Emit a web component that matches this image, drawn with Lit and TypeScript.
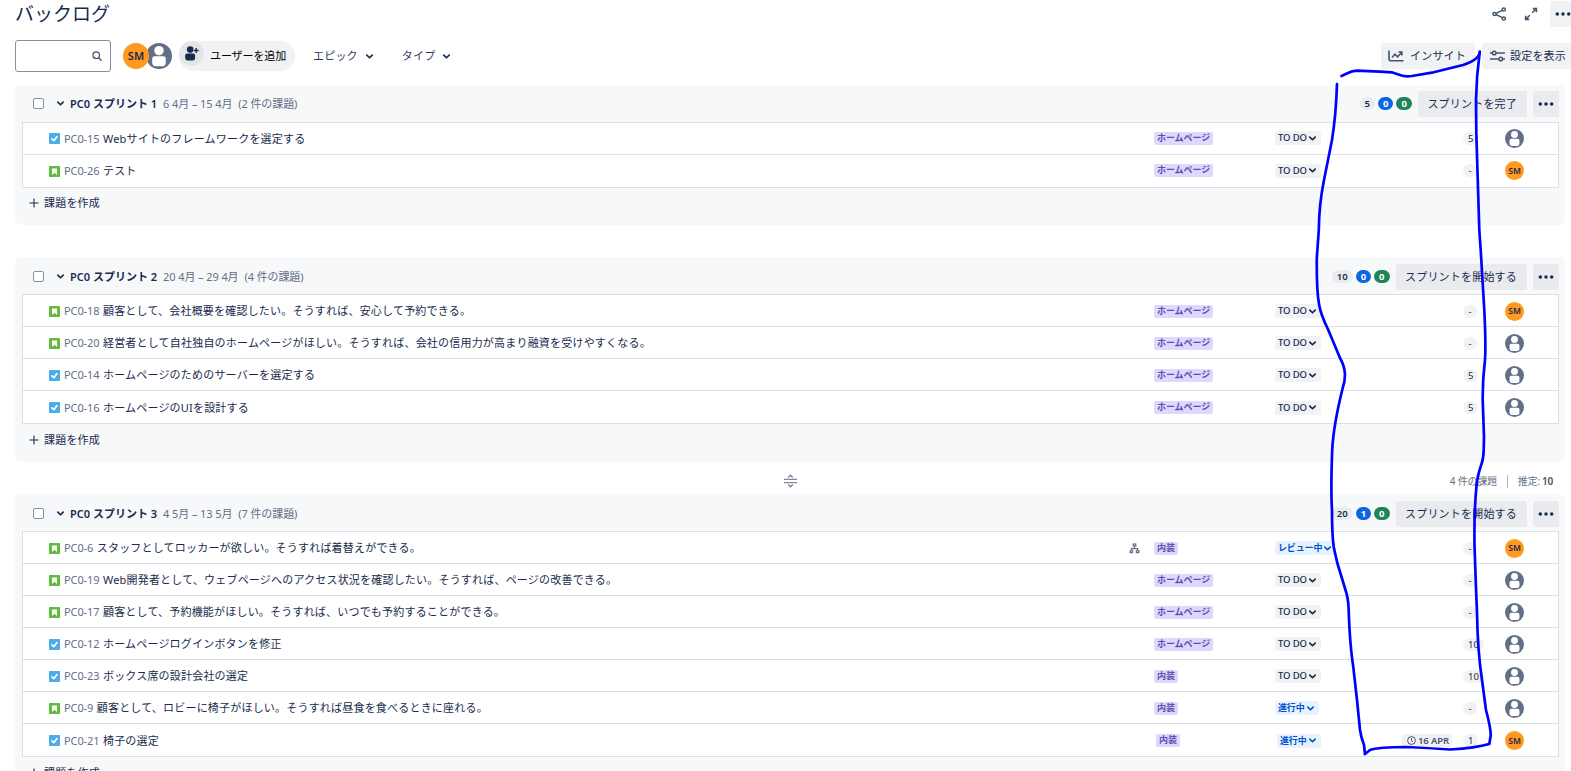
import { LitElement, html, css, svg, nothing } from "lit";
import { customElement, property } from "lit/decorators.js";
import { classMap } from "lit/directives/class-map.js";

type Issue = {
  kind: "task" | "story";
  key: string;
  title: string;
  epic: string;
  status: string;
  points: string;
  owner: "SM" | "";
  due?: string;
  children?: boolean;
  nudge?: boolean;
};
type Sprint = { name: string; dates: string; count: string; totals: string[]; action: string; issues: Issue[] };

const HOME = "ホームページ";
const INTERIOR = "内装";
const issue = (
  kind: Issue["kind"], key: string, title: string, epic: string, status: string,
  points: string, owner: Issue["owner"], extra: Partial<Issue> = {},
): Issue => ({ kind, key, title, epic, status, points, owner, ...extra });

const SPRINTS: Sprint[] = [
  {
    name: "PC0 スプリント 1", dates: "6 4月 – 15 4月", count: "(2 件の課題)", totals: ["5", "0", "0"], action: "スプリントを完了",
    issues: [
      issue("task", "PC0-15", "Webサイトのフレームワークを選定する", HOME, "TO DO", "5", ""),
      issue("story", "PC0-26", "テスト", HOME, "TO DO", "-", "SM"),
    ],
  },
  {
    name: "PC0 スプリント 2", dates: "20 4月 – 29 4月", count: "(4 件の課題)", totals: ["10", "0", "0"], action: "スプリントを開始する",
    issues: [
      issue("story", "PC0-18", "顧客として、会社概要を確認したい。そうすれば、安心して予約できる。", HOME, "TO DO", "-", "SM"),
      issue("story", "PC0-20", "経営者として自社独自のホームページがほしい。そうすれば、会社の信用力が高まり融資を受けやすくなる。", HOME, "TO DO", "-", ""),
      issue("task", "PC0-14", "ホームページのためのサーバーを選定する", HOME, "TO DO", "5", ""),
      issue("task", "PC0-16", "ホームページのUIを設計する", HOME, "TO DO", "5", ""),
    ],
  },
  {
    name: "PC0 スプリント 3", dates: "4 5月 – 13 5月", count: "(7 件の課題)", totals: ["20", "1", "0"], action: "スプリントを開始する",
    issues: [
      issue("story", "PC0-6", "スタッフとしてロッカーが欲しい。そうすれば着替えができる。", INTERIOR, "レビュー中", "-", "SM", { children: true }),
      issue("story", "PC0-19", "Web開発者として、ウェブページへのアクセス状況を確認したい。そうすれば、ページの改善できる。", HOME, "TO DO", "-", ""),
      issue("story", "PC0-17", "顧客として、予約機能がほしい。そうすれば、いつでも予約することができる。", HOME, "TO DO", "-", ""),
      issue("task", "PC0-12", "ホームページログインボタンを修正", HOME, "TO DO", "10", ""),
      issue("task", "PC0-23", "ボックス席の設計会社の選定", INTERIOR, "TO DO", "10", ""),
      issue("story", "PC0-9", "顧客として、ロビーに椅子がほしい。そうすれば昼食を食べるときに座れる。", INTERIOR, "進行中", "-", ""),
      issue("task", "PC0-21", "椅子の選定", INTERIOR, "進行中", "1", "SM", { due: "16 APR", nudge: true }),
    ],
  },
];

const icon = (w: number, h: number, body: unknown) =>
  html`<svg width=${w} height=${h} viewBox="0 0 ${w} ${h}" fill="none">${body}</svg>`;

const chevron = (w = 8) => html`<svg width=${w} height=${w} viewBox="0 0 8 8" fill="none"><path d="M1.6 2.8 4 5.1 6.4 2.8" stroke="currentColor" stroke-width="1.5" stroke-linecap="round" stroke-linejoin="round"/></svg>`;
const dots = () => icon(16, 4, svg`<g fill="currentColor"><circle cx="2.3" cy="2" r="1.75"/><circle cx="8" cy="2" r="1.75"/><circle cx="13.7" cy="2" r="1.75"/></g>`);
const taskIcon = () => icon(11, 11, svg`<rect width="11" height="11" rx="1" fill="#4bade8"/><path d="M3 5.8 4.8 7.6 8 3.6" stroke="#fff" stroke-width="1.7" stroke-linecap="round" stroke-linejoin="round"/>`);
const storyIcon = () => icon(11, 11, svg`<rect width="11" height="11" rx="1" fill="#63ba3c"/><path d="M3 2.4h5v6.6L5.5 6.8 3 9z" fill="#fff"/>`);
const person = (s: number) => html`<svg width=${s} height=${s} viewBox="0 0 26 26"><circle cx="13" cy="13" r="13" fill="#626f86"/><circle cx="13" cy="7.6" r="4.7" fill="#fff"/><path d="M6.2 15.6q0-2.4 2.4-2.4h8.8q2.4 0 2.4 2.4v4q0 3.6-3.4 3.6H9.6q-3.4 0-3.4-3.6z" fill="#fff"/></svg>`;

const shared = css`
  * { box-sizing: border-box; }
  svg { display: block; flex: none; }
  .avatar { border-radius: 50%; background: #ff991f; color: #172b4d; display: flex; align-items: center; justify-content: center; flex: none; font-weight: 600; letter-spacing: 0; }
`;

@customElement("issue-row")
class IssueRow extends LitElement {
  @property({ attribute: false }) issue!: Issue;
  static styles = [shared, css`
    :host { display: flex; align-items: center; height: 32px; padding: var(--row-top, 0px) 0 1px 26px; border-bottom: 1px solid #dcdfe4; background: #fff; }
    :host(:last-child) { height: 33px; }
    .main { flex: 1; display: flex; align-items: center; min-width: 0; white-space: pre; padding-top: var(--main-top, 1px); }
    .key { color: #626f86; margin-left: 4px; letter-spacing: -0.1px; }
    .title { flex: 1; margin-left: 3.5px; }
    .tree { color: #626f86; margin-right: 14px; }
    .epic { width: 121px; display: flex; }
    .status { width: 127px; display: flex; }
    .due { width: 61px; display: flex; }
    .points { width: 42px; display: flex; }
    .owner { width: 53px; display: flex; }
    .nudge { padding-left: 2px; }
    .tag { height: 13px; line-height: 12px; padding: 0 3px; border-radius: 2px; background: #dfd8fd; color: #5e4db2; font-size: 9px; font-weight: 600; letter-spacing: -0.08px; white-space: nowrap; }
    .lozenge { height: 14px; line-height: 14px; padding: 0 4px 0 3px; border-radius: 2px; background: #f1f2f4; font-size: 9.5px; font-weight: 500; letter-spacing: -0.1px; display: flex; align-items: center; gap: 1.5px; white-space: nowrap; }
    .lozenge.active { background: #e9f2ff; color: #0055cc; font-size: 9px; font-weight: 700; letter-spacing: -0.15px; gap: 1px; }
    .date { height: 13px; line-height: 13px; padding: 0 3px 0 5px; border-radius: 2px; background: #f1f2f4; font-size: 9.5px; font-weight: 600; letter-spacing: -0.1px; color: #44546f; display: flex; align-items: center; gap: 2px; white-space: nowrap; }
    .badge { height: 13px; line-height: 13px; min-width: 14px; padding: 0 5px; text-align: center; border-radius: 7px; background: #f1f2f4; font-size: 9.5px; letter-spacing: 0; }
    .avatar { width: 19px; height: 19px; font-size: 8.5px; }
  `];
  render() {
    const i = this.issue;
    const off = { nudge: !!i.nudge };
    return html`
      <div class="main">
        ${i.kind === "task" ? taskIcon() : storyIcon()}
        <span class="key">${i.key}</span><span class="title">${i.title}</span>
        ${i.children ? html`<span class="tree">${icon(11, 11, svg`<g stroke="currentColor" stroke-width="1.2"><rect x="4.2" y="1" width="2.6" height="2"/><rect x="1.2" y="7.8" width="2.4" height="1.8"/><rect x="7.4" y="7.8" width="2.4" height="1.8"/><path d="M5.5 3.4v2.2M2.4 7.5V5.6h6.2v1.9"/></g>`)}</span>` : nothing}
      </div>
      <div class=${classMap({ epic: true, ...off })}><span class="tag">${i.epic}</span></div>
      <div class=${classMap({ status: true, ...off })}>
        <span class=${classMap({ lozenge: true, active: i.status !== "TO DO" })}>${i.status}${chevron(9)}</span>
      </div>
      <div class="due">${i.due ? html`<span class="date">${icon(9, 9, svg`<circle cx="4.5" cy="4.5" r="3.9" stroke="currentColor"/><path d="M4.5 2.2v2.6l1.5 1" stroke="currentColor"/>`)}${i.due}</span>` : nothing}</div>
      <div class="points"><span class="badge">${i.points}</span></div>
      <div class="owner">${i.owner ? html`<span class="avatar">${i.owner}</span>` : person(19)}</div>
    `;
  }
}

@customElement("sprint-card")
class SprintCard extends LitElement {
  @property({ attribute: false }) sprint!: Sprint;
  static styles = [shared, css`
    :host { display: block; margin: 0 6px 0 15px; padding: 0 6px 37px 7px; border-radius: 6px; background: #f7f8f9; }
    :host(.low) { padding-bottom: 38px; --row-top: 2px; --main-top: 0px; --head-top: 2px; --create-top: 2px; }
    header { display: flex; align-items: center; height: 37px; padding: var(--head-top, 0px) 0 0 11px; white-space: nowrap; }
    .check { width: 11px; height: 11px; border: 1px solid #8590a2; border-radius: 2px; background: #fff; margin-right: 12px; }
    .name { font-weight: 600; margin-left: 5px; letter-spacing: 0; }
    .meta { color: #626f86; margin-left: 6px; letter-spacing: -0.1px; }
    .fill { flex: 1; }
    .total { height: 13px; line-height: 13px; min-width: 15px; padding: 0 5px; margin-right: 3px; text-align: center; border-radius: 7px; font-size: 9.5px; font-weight: 600; letter-spacing: 0; background: #e9ebee; }
    .total.progress { background: #0c66e4; color: #fff; font-weight: 700; }
    .total.done { background: #1f845a; color: #fff; font-weight: 700; margin-right: 6px; }
    .button { height: 26px; display: flex; align-items: center; justify-content: center; border-radius: 2px; background: #e9ebee; }
    .action { padding: 0 10px 0 9.5px; margin-right: 6px; }
    .more { width: 26px; }
    .list { border: 1px solid #dcdfe4; border-bottom: 0; }
    .create { height: 0; }
    .create span { display: flex; align-items: center; gap: 5px; height: 30px; padding: var(--create-top, 0px) 0 0 7px; }
  `];
  render() {
    const s = this.sprint;
    return html`
      <header>
        <span class="check"></span>${chevron(9)}
        <span class="name">${s.name}</span><span class="meta">${s.dates}</span><span class="meta">${s.count}</span>
        <span class="fill"></span>
        <span class="total">${s.totals[0]}</span><span class="total progress">${s.totals[1]}</span><span class="total done">${s.totals[2]}</span>
        <span class="button action">${s.action}</span><span class="button more">${dots()}</span>
      </header>
      <div class="list">${s.issues.map((i) => html`<issue-row .issue=${i}></issue-row>`)}</div>
      <div class="create"><span>${icon(10, 10, svg`<path d="M5 .5v9M.5 5h9" stroke="currentColor" stroke-width="1.1"/>`)}課題を作成</span></div>
    `;
  }
}

@customElement("app-root")
class AppRoot extends LitElement {
  static styles = [shared, css`
    :host { display: block; position: relative; width: 1571px; height: 771px; overflow: hidden; background: #fff; color: #172b4d; font: 11px/16px "Noto Sans", "Noto Sans CJK JP", sans-serif; letter-spacing: 0.2px; }
    .top { height: 28px; display: flex; align-items: center; padding-left: 15px; }
    h1 { flex: 1; margin: 0; font-size: 19px; line-height: 28px; font-weight: 400; letter-spacing: 0; }
    .top svg { color: #44546f; }
    .share { margin-right: 17px; }
    .expand { margin-right: 12px; }
    .more { width: 21px; height: 26px; padding-left: 5px; display: flex; align-items: center; border-radius: 2px 0 0 2px; background: #f1f2f4; overflow: hidden; }
    .top .more svg { color: #172b4d; }
    .tools { height: 57px; padding: 0 0 1px 15px; display: flex; align-items: center; white-space: nowrap; }
    .search { width: 96px; height: 32px; border: 1px solid #8590a2; border-radius: 3px; display: flex; align-items: center; justify-content: flex-end; padding: 0 8px 1px 0; color: #44546f; margin-right: 12px; }
    .avatar { width: 26px; height: 26px; font-size: 11px; z-index: 1; }
    .people { display: flex; margin-right: 7px; }
    .people svg { margin-left: -3px; }
    .add { width: 116px; height: 30px; border-radius: 15px; background: #f1f2f4; display: flex; align-items: center; color: #000; letter-spacing: -0.1px; gap: 6px; margin-right: 18px; }
    .bubble { width: 25px; height: 25px; border-radius: 50%; background: #e3e5e9; display: flex; align-items: center; justify-content: center; margin-bottom: 5px; color: #172b4d; }
    .filter { display: flex; align-items: center; gap: 7px; margin-right: 28px; color: #2c3e5d; }
    .filter svg { color: #172b4d; }
    .fill { flex: 1; }
    .button { height: 26px; display: flex; align-items: center; background: #f1f2f4; border-radius: 2px; gap: 6px; padding-left: 7px; }
    .button svg { color: #44546f; }
    .insight { width: 94px; margin-right: 7px; }
    .view { width: 89px; padding-left: 8px; gap: 5px; border-radius: 2px 0 0 2px; }
    .gap { height: 32px; }
    .divider { display: grid; grid-template-columns: 1fr auto 1fr; align-items: center; height: 32px; padding: 6px 18px 0 27px; color: #626f86; font-size: 10px; letter-spacing: -0.2px; }
    .divider svg { color: #7d899c; }
    .sum { display: flex; justify-content: flex-end; align-items: center; }
    .sum i { width: 1px; height: 13px; background: #b3b9c4; margin: 0 10px; }
    .sum b { font-weight: 600; color: #44546f; margin-left: 2px; font-size: 10px; }
    .ink { position: absolute; left: 0; top: 0; }
  `];
  render() {
    return html`
      <div class="top">
        <h1>バックログ</h1>
        <span class="share">${icon(15, 14, svg`<g stroke="currentColor" stroke-width="1.5"><circle cx="2.6" cy="7" r="1.6"/><circle cx="11.8" cy="2.5" r="1.6"/><circle cx="11.8" cy="11.5" r="1.6"/><path d="M4.2 6.3 10.2 3.3M4.2 7.7l6 3"/></g>`)}</span>
        <span class="expand">${icon(14, 14, svg`<path d="M8.8 1.6h3.6v3.6M12.2 1.8 8.2 5.8M5.2 12.4H1.6V8.8M1.8 12.2l4-4" stroke="currentColor" stroke-width="1.6"/>`)}</span>
        <span class="more">${dots()}</span>
      </div>
      <div class="tools">
        <span class="search">${icon(10, 10, svg`<circle cx="4.2" cy="4.2" r="3.3" stroke="currentColor" stroke-width="1.2"/><path d="M6.7 6.8 9.2 9.2" stroke="currentColor" stroke-width="1.3" stroke-linecap="round"/>`)}</span>
        <span class="people"><span class="avatar">SM</span>${person(26)}</span>
        <span class="add"><span class="bubble">${icon(15, 15, svg`<g fill="currentColor"><circle cx="6.2" cy="3.6" r="3.3"/><path d="M1.2 9.4Q1.2 7.6 3 7.6h6.3q1.8 0 1.8 1.8v2.4q0 2.7-2.6 2.7H3.8q-2.6 0-2.6-2.7z"/></g><path d="M12.2 2v5M9.7 4.5h5" stroke="#e3e5e9" stroke-width="3"/><path d="M12.2 2v5M9.7 4.5h5" stroke="currentColor" stroke-width="1.4"/>`)}</span>ユーザーを追加</span>
        <span class="filter">エピック${chevron(9)}</span>
        <span class="filter">タイプ${chevron(9)}</span>
        <span class="fill"></span>
        <span class="button insight">${icon(16, 12, svg`<path d="M1 .5v8.2q0 2 2 2h12.5" stroke="currentColor" stroke-width="1.6"/><path d="M4 7.6 7 4.2l2.6 2.6 4-4.4M10.4 2h3.5v3.5" stroke="currentColor" stroke-width="1.5"/>`)}インサイト</span>
        <span class="button view">${icon(15, 12, svg`<g stroke="currentColor" stroke-width="1.5"><path d="M0 3h2.3M6.2 3H15M0 9h8.8M12.7 9H15"/><circle cx="4.2" cy="3" r="1.8"/><circle cx="10.8" cy="9" r="1.8"/></g>`)}設定を表示</span>
      </div>
      <sprint-card .sprint=${SPRINTS[0]}></sprint-card>
      <div class="gap"></div>
      <sprint-card class="low" .sprint=${SPRINTS[1]}></sprint-card>
      <div class="divider">
        <span></span>
        ${icon(13, 14, svg`<path d="M0 5.3h13M0 8.7h13" stroke="currentColor" stroke-width="1.3"/><path d="M4.2 3.4 6.5 1.2l2.3 2.2M4.2 10.6l2.3 2.2 2.3-2.2" stroke="currentColor" stroke-width="1.4"/>`)}
        <span class="sum">4 件の課題<i></i>推定:<b>10</b></span>
      </div>
      <sprint-card class="low" .sprint=${SPRINTS[2]}></sprint-card>
      <svg class="ink" width="1571" height="771" viewBox="0 0 1571 771" fill="none" stroke="#0000ff" stroke-width="2.7" stroke-linecap="round" stroke-linejoin="round">
        <path d="M1341.5 76 C1347 74 1350 70.8 1357 70.7 L1380 71.6 L1391.7 72.3 L1400 75 Q1405 77 1412 76 L1431.7 72.7 L1463 65 Q1472 62 1476 58.5 T1479.8 51.5 Q1476.5 75 1476 100 L1476.3 133 L1479.3 230 L1480.7 250 L1484.3 310 Q1486 345 1485 360 Q1482.5 380 1482.7 400 L1484 437 L1483.7 450 Q1483.5 458 1481.8 463 Q1477 477 1476.5 486 Q1474 512 1474.5 545 Q1476 590 1477 612 Q1477.5 650 1482 680 L1486 710 Q1490.5 727 1490.8 735 L1489.3 744 Q1476 748 1450 749.5 Q1428 748 1406.7 747 Q1378 747 1370 750 L1365 754"/>
        <path d="M1337 84 Q1336 115 1332 140 L1324 180 Q1319 205 1318.8 230 L1316.8 258 Q1316.5 290 1319 304 Q1320.5 314 1328.3 330 L1340 358 Q1344.5 366 1345 374 Q1345 382 1342.7 388 Q1333.5 425 1332.2 450 Q1330.7 490 1332 510 Q1332 535 1333.7 547 L1337.3 563 L1345.5 590 Q1348 597 1348.6 608 Q1349.8 645 1353.3 667 L1357 700 L1360 730 Q1361 737 1364 745 L1365 754"/>
      </svg>
    `;
  }
}
